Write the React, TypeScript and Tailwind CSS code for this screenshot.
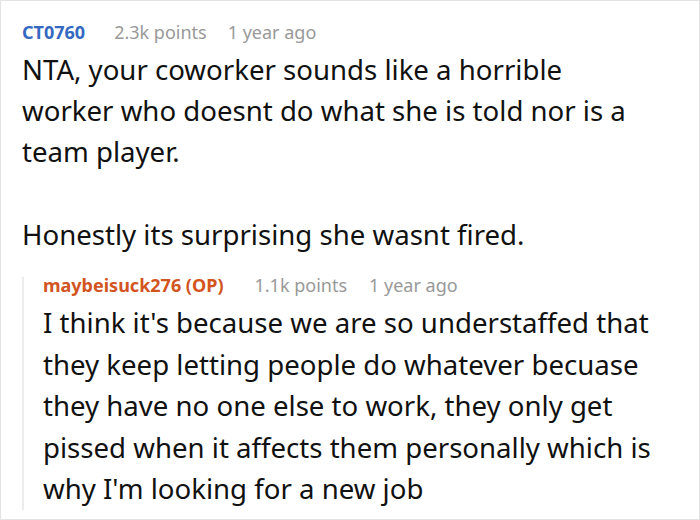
export default function App() {
  const font = { fontFamily: '"Noto Sans", "Open Sans", sans-serif' };
  return (
    <div className="w-[700px] h-[520px] bg-white border border-[#e3e3e3] overflow-hidden" style={font}>
      <div className="pl-[21px] pr-[42px] pt-[18px]">
        <div className="flex items-center text-[18px] leading-[26px]">
          <span className="font-bold text-[#3568c0]">CT0760</span>
          <span className="ml-[29px] text-[#999999]">2.3k points</span>
          <span className="ml-[21px] text-[#999999]">1 year ago</span>
        </div>
        <div className="mt-[4px] text-[27.6px] leading-[41px] text-[#111111]">
          <p>NTA, your coworker sounds like a horrible worker who doesnt do what she is told nor is a team player.</p>
          <p className="mt-[42px]">Honestly its surprising she wasnt fired.</p>
        </div>
        <div className="mt-[22px] border-l-2 border-[#ececec] pl-[19px]">
          <div className="flex items-center text-[18px] leading-[16px]">
            <span className="font-bold text-[#d2541e]">maybeisuck276 (OP)</span>
            <span className="ml-[31px] text-[#999999]">1.1k points</span>
            <span className="ml-[22px] text-[#999999]">1 year ago</span>
          </div>
          <p className="mt-[9px] text-[27.6px] leading-[41.5px] text-[#111111]">
            I think it's because we are so understaffed that they keep letting people do whatever becuase they have no one else to work, they only get pissed when it affects them personally which is why I'm looking for a new job
          </p>
        </div>
      </div>
    </div>
  );
}
